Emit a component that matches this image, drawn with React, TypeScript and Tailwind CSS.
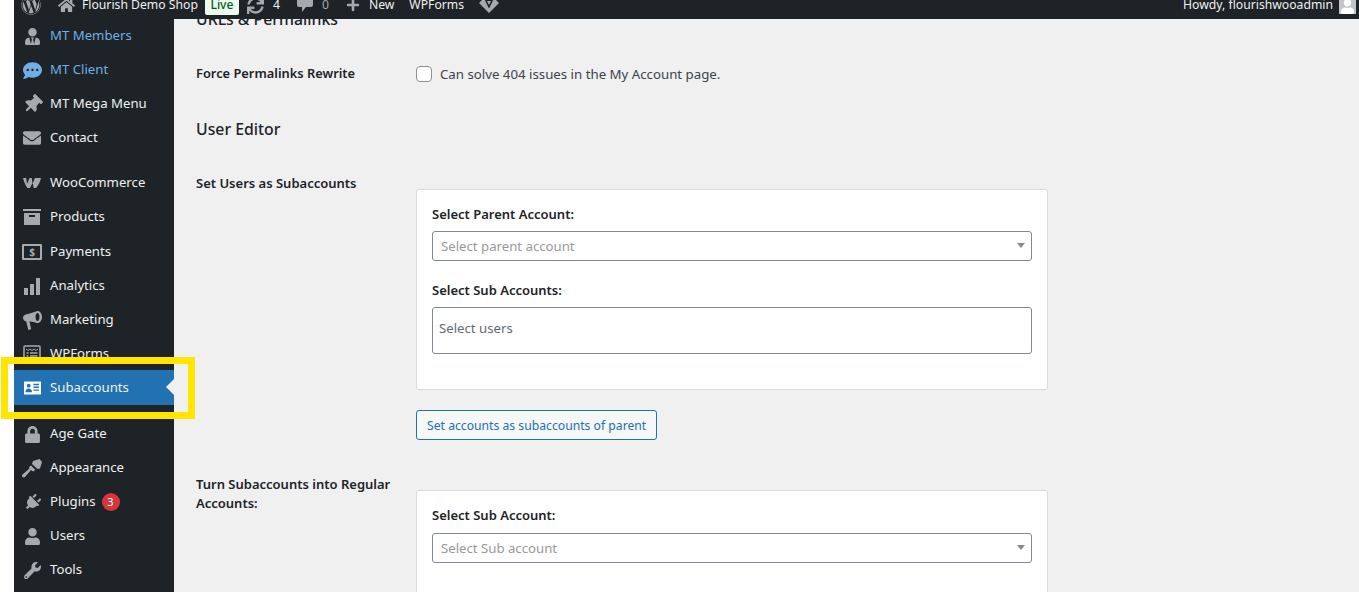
import React from 'react';
import { FaWordpress, FaHome, FaSync, FaPlus, FaUserTie, FaCommentDots, FaThumbtack, FaEnvelope, FaLock, FaPlug, FaUser, FaWrench } from 'react-icons/fa';

const FONT = "font-['Noto_Sans',sans-serif]";

function WooIcon() {
  return (
    <svg width="20" height="12" viewBox="0 0 20 12" fill="currentColor">
      <path d="M1 1h3.200l.8 6 2.600-6h2.200l.7 6 2.400-6H19c-.8 3.500-2.700 7.500-5 10h-2.400l-.9-5.500L8 11H5.400C3.500 8 1.800 4.500 1 1z" />
    </svg>
  );
}

function BoxIcon() {
  return (
    <svg width="20" height="16" viewBox="0 0 20 16" fill="currentColor">
      <path d="M1 0h18v2H1zM2 4h16v12H2zM7 6v2h6V6z" fillRule="evenodd" />
    </svg>
  );
}

function PaymentIcon() {
  return (
    <span className="w-[20px] h-[16px] border-2 border-[#a7aaad] rounded-[1px] flex items-center justify-center text-[10px] font-bold text-[#a7aaad] leading-none">$</span>
  );
}

function BarsIcon() {
  return (
    <svg width="18" height="17" viewBox="0 0 18 17" fill="currentColor">
      <path d="M1 10h4v7H1zM7 6h4v11H7zM13 0h4v17h-4z" />
    </svg>
  );
}

function MegaphoneIcon() {
  return (
    <svg width="19" height="19" viewBox="0 0 19 19" fill="currentColor">
      <path fillRule="evenodd" d="M14.500 0C17 0 19 2.700 19 6s-2 6-4.500 6c-1 0-5-1.500-8-1.500L8 17.500c0 .8-.7 1.200-1.400 1.200H5.200L3.300 10.500C1.500 10.300 0 8.500 0 6.800 0 4.800 1.500 3.500 3.500 3.200 7.500 3 13 0 14.500 0zM14.500 2c-1.200 0-2 1.800-2 4s.8 4 2 4 2-1.800 2-4-.8-4-2-4z" />
    </svg>
  );
}

function BrushIcon() {
  return (
    <svg width="20" height="19" viewBox="0 0 20 19" fill="currentColor">
      <path d="M11 2l6.500-2L20 3l-2 6.500-2.500.5L10 5z" />
      <path d="M9 6.500l4.500 4.500-2.500 1.500-2-1.500-6 7c-.8.600-2 .6-2.600-.2-.6-.7-.5-1.800.1-2.400L7.500 9.500 7 8z" />
    </svg>
  );
}

function CommentIcon() {
  return (
    <svg width="16" height="17" viewBox="0 0 16 17" fill="currentColor">
      <path d="M2 0h12c1.100 0 2 .9 2 2v7c0 1.100-.9 2-2 2H9l-4 5v-5H2c-1.100 0-2-.9-2-2V2C0 .9.9 0 2 0z" />
    </svg>
  );
}

function FormsIcon() {
  return (
    <svg width="18" height="18" viewBox="0 0 18 18" fill="none" stroke="currentColor">
      <rect x="1" y="1" width="16" height="16" rx="1" strokeWidth="1.500" />
      <path d="M3 4l2 1.500L7 4l2 1.500L11 4l2 1.500L15 4" strokeWidth="1" />
      <path d="M3.500 8h2M7 8h7.500M3.500 11h2M7 11h7.500M3.500 14h2M7 14h7.500" strokeWidth="1.400" />
    </svg>
  );
}

function CardIcon() {
  return (
    <svg width="17" height="14" viewBox="0 0 18 14" fill="#fff">
      <path fillRule="evenodd" d="M0 0h18v14H0zM10 2.500v1.500h6V2.500zM10 5.500V7h6V5.500zM10 8.500V10h6V8.500zM5 2.500a2 2 0 1 0 0 4 2 2 0 0 0 0-4zM1.500 11.500h7C8.500 9 7 7.500 5 7.500S1.500 9 1.500 11.500z" />
    </svg>
  );
}

function DiamondIcon() {
  return (
    <svg width="20" height="20" viewBox="0 0 20 20" fill="#a7aaad">
      <path fillRule="evenodd" d="M10 0l10 10-10 10L0 10zM10 4L6 7.500l4 8 4-8z" />
      <path d="M8 8h4l-2 4z" />
    </svg>
  );
}

function MenuRow({ icon, label, color, badge, current }: { icon: React.ReactNode; label: string; color?: string; badge?: string; current?: boolean }) {
  return (
    <div className={`relative flex items-center ${current ? 'h-[35px] bg-[#2271b1]' : 'h-[34px] pt-[2px]'}`}>
      <span className={`w-[36px] flex justify-center shrink-0 ${current ? 'text-white' : 'text-[#a7aaad]'}`}>{icon}</span>
      <span className={`text-[13.200px] ${color || 'text-[#f0f0f1]'}`}>{label}</span>
      {badge && (
        <span className="ml-[6px] w-[18px] h-[18px] rounded-full bg-[#d63638] text-white text-[11px] flex items-center justify-center">{badge}</span>
      )}
      {current && (
        <span className="absolute right-0 top-[9px] w-0 h-0 border-y-[8px] border-y-transparent border-r-[8px] border-r-[#f0f0f1]" />
      )}
    </div>
  );
}

function SelectBox({ placeholder }: { placeholder: string }) {
  return (
    <div className="h-[30px] border border-[#7e8993] rounded-[3px] bg-white pl-2 pr-[6px] flex items-center justify-between">
      <span className="mt-px text-[13.200px] text-[#999999]">{placeholder}</span>
      <span className="w-0 h-0 border-x-[4px] border-x-transparent border-t-[5px] border-t-[#888888] -mt-[2px]" />
    </div>
  );
}

function FieldLabel({ children }: { children: React.ReactNode }) {
  return <div className="text-[13px] font-semibold text-[#1d2327] leading-[20px]">{children}</div>;
}

export default function App() {
  return (
    <div className={`${FONT} relative w-[1359px] h-[592px] overflow-hidden bg-white flex`}>
      <div className="w-[14px] shrink-0 bg-white" />

      <div className="flex-1 flex flex-col min-w-0">
        {/* Admin bar, page is scrolled so its text is cut at the top */}
        <div className="relative z-10 h-[19px] shrink-0 bg-[#1d2327] overflow-hidden text-[#f0f0f1]">
          <div className="h-[26px] -mt-[8px] flex items-center text-[12.200px] whitespace-nowrap">
            <FaWordpress size={20} className="ml-[7px] text-[#a7aaad]" />
            <FaHome size={17} className="ml-[17px] text-[#a7aaad]" />
            <span className="ml-[7px]">Flourish Demo Shop</span>
            <span className="ml-[7px] h-[20px] w-[34px] -mt-[1px] rounded-[2px] bg-[#edfaef] text-[#005c12] text-[12px] flex items-center justify-center font-medium">Live</span>
            <FaSync size={17} className="ml-[8px] text-[#a7aaad]" />
            <span className="ml-[9px]">4</span>
            <span className="ml-[17px] text-[#a7aaad] -mt-[2px]"><CommentIcon /></span>
            <span className="ml-[9px] text-[#a7aaad]">0</span>
            <FaPlus size={14} className="ml-[17px] text-[#a7aaad]" />
            <span className="ml-[9px]">New</span>
            <span className="ml-[15px]">WPForms</span>
            <span className="ml-[15px] -mt-[4px]"><DiamondIcon /></span>
            <span className="ml-auto">Howdy, flourishwooadmin</span>
            <span className="ml-[6px] mr-[3px] w-[17px] h-[20px] -mt-[2px] bg-[#c3c4c7] flex items-end justify-center overflow-hidden">
              <FaUser size={15} className="text-white" />
            </span>
          </div>
        </div>

        <div className="flex-1 flex min-h-0">
          {/* Sidebar */}
          <div className="w-[160px] shrink-0 bg-[#1d2327] overflow-hidden">
            <div className="-mt-px">
              <MenuRow icon={<FaUserTie size={17} />} label="MT Members" color="text-[#72aee6]" />
              <MenuRow icon={<FaCommentDots size={19} className="text-[#72aee6]" />} label="MT Client" color="text-[#72aee6]" />
              <MenuRow icon={<FaThumbtack size={19} className="rotate-45" />} label="MT Mega Menu" />
              <MenuRow icon={<FaEnvelope size={18} />} label="Contact" />
              <div className="h-[11px]" />
              <MenuRow icon={<WooIcon />} label="WooCommerce" />
              <MenuRow icon={<BoxIcon />} label="Products" />
              <div className="h-px" />
              <MenuRow icon={<PaymentIcon />} label="Payments" />
              <MenuRow icon={<BarsIcon />} label="Analytics" />
              <MenuRow icon={<MegaphoneIcon />} label="Marketing" />
              <MenuRow icon={<FormsIcon />} label="WPForms" />
              <MenuRow icon={<CardIcon />} label="Subaccounts" current />
              <div className="h-[11px]" />
              <MenuRow icon={<FaLock size={17} />} label="Age Gate" />
              <MenuRow icon={<BrushIcon />} label="Appearance" />
              <MenuRow icon={<FaPlug size={17} className="rotate-45" />} label="Plugins" badge="3" />
              <MenuRow icon={<FaUser size={17} />} label="Users" />
              <MenuRow icon={<FaWrench size={17} />} label="Tools" />
            </div>
          </div>

          {/* Settings */}
          <div className="flex-1 min-w-0 bg-[#f0f0f1] pl-[22px] text-[#1d2327] overflow-hidden">
            <h2 className="-mt-[11px] h-[22px] leading-[22px] text-[15.800px] font-medium">URLs &amp; Permalinks</h2>

            <div className="mt-[30px] flex items-center h-[28px]">
              <div className="w-[220px] text-[12.850px] font-semibold">Force Permalinks Rewrite</div>
              <span className="w-4 h-4 rounded-[4px] border border-[#8c8f94] bg-white" />
              <span className="ml-2 mt-[2px] text-[13.250px] text-[#3c434a]">Can solve 404 issues in the My Account page.</span>
            </div>

            <h2 className="mt-[30px] h-[22px] leading-[22px] text-[15.800px] font-medium">User Editor</h2>

            <div className="mt-[33px] flex items-start">
              <div className="w-[220px] text-[13px] font-semibold leading-[20px]">Set Users as Subaccounts</div>
              <div className="mt-[16px] w-[632px]">
                <div className="h-[201px] border border-[#dcdcde] rounded-[3px] bg-white px-[15px] pt-[14px]">
                  <FieldLabel>Select Parent Account:</FieldLabel>
                  <div className="mt-[7px]"><SelectBox placeholder="Select parent account" /></div>
                  <div className="mt-[19px]"><FieldLabel>Select Sub Accounts:</FieldLabel></div>
                  <div className="mt-[7px] h-[47px] border border-[#7e8993] rounded-[3px] pl-[6px] pt-[10px] text-[13.200px] leading-[20px] text-[#646970]">Select users</div>
                </div>
                <button className="mt-[20px] h-[30px] px-[10px] pt-[2px] border border-[#2271b1] rounded-[3px] bg-[#f6f7f7] text-[#2271b1] text-[12.200px]">Set accounts as subaccounts of parent</button>
              </div>
            </div>

            <div className="mt-[35px] flex items-start">
              <div className="w-[220px] pr-[10px] text-[13px] font-semibold leading-[19px]">Turn Subaccounts into Regular Accounts:</div>
              <div className="mt-[15px] w-[632px] h-[140px] shrink-0 border border-[#dcdcde] rounded-[3px] bg-white px-[15px] pt-[14px]">
                <FieldLabel>Select Sub Account:</FieldLabel>
                <div className="mt-[8px]"><SelectBox placeholder="Select Sub account" /></div>
              </div>
            </div>
          </div>
        </div>
      </div>

      {/* Yellow highlight drawn over the screenshot */}
      <div className="absolute z-20 left-px top-[357px] w-[194px] h-[62px] border-[7px] border-[#ffe500] pointer-events-none" />
    </div>
  );
}
